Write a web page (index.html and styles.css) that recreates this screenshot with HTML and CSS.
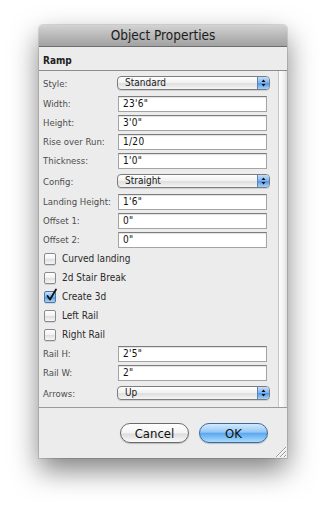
FILE: index.html
```html
<html>

<head>
  <title>Object Properties</title>
  <link rel="stylesheet" href="styles.css">
</head>

<body>
  <div class="window">
    <div class="titlebar">Object Properties</div>
    <div class="header">Ramp</div>

    <div class="main">
      <div class="form">
        <div class="row tall">
          <span class="label">Style:</span>
          <div class="popup"><span class="value">Standard</span><span class="arrows"><svg width="11" height="12" viewBox="0 0 11 12"><path d="M3.5 5 L5.5 2.5 L7.5 5 Z M3.5 7 L5.5 9.5 L7.5 7 Z" fill="#111"/></svg></span></div>
        </div>
        <div class="row"><span class="label">Width:</span><div class="field">23'6"</div></div>
        <div class="row"><span class="label">Height:</span><div class="field">3'0"</div></div>
        <div class="row"><span class="label">Rise over Run:</span><div class="field">1/20</div></div>
        <div class="row"><span class="label">Thickness:</span><div class="field">1'0"</div></div>
        <div class="row tall">
          <span class="label">Config:</span>
          <div class="popup"><span class="value">Straight</span><span class="arrows"><svg width="11" height="12" viewBox="0 0 11 12"><path d="M3.5 5 L5.5 2.5 L7.5 5 Z M3.5 7 L5.5 9.5 L7.5 7 Z" fill="#111"/></svg></span></div>
        </div>
        <div class="row"><span class="label">Landing Height:</span><div class="field">1'6"</div></div>
        <div class="row"><span class="label">Offset 1:</span><div class="field">0"</div></div>
        <div class="row"><span class="label">Offset 2:</span><div class="field">0"</div></div>

        <div class="row"><span class="check"></span><span class="clabel">Curved landing</span></div>
        <div class="row"><span class="check"></span><span class="clabel">2d Stair Break</span></div>
        <div class="row">
          <span class="check on"><svg class="tick" width="13" height="14" viewBox="0 0 13 14"><path d="M2.5 8 L5 11.5 L11 1.5" fill="none" stroke="#111" stroke-width="1.8" stroke-linecap="round" stroke-linejoin="round"/></svg></span>
          <span class="clabel">Create 3d</span>
        </div>
        <div class="row"><span class="check"></span><span class="clabel">Left Rail</span></div>
        <div class="row"><span class="check"></span><span class="clabel">Right Rail</span></div>

        <div class="row"><span class="label">Rail H:</span><div class="field">2'5"</div></div>
        <div class="row"><span class="label">Rail W:</span><div class="field">2"</div></div>
        <div class="row tall">
          <span class="label">Arrows:</span>
          <div class="popup"><span class="value">Up</span><span class="arrows"><svg width="11" height="12" viewBox="0 0 11 12"><path d="M3.5 5 L5.5 2.5 L7.5 5 Z M3.5 7 L5.5 9.5 L7.5 7 Z" fill="#111"/></svg></span></div>
        </div>
      </div>
      <div class="track"></div>
    </div>

    <div class="footer">
      <button class="btn">Cancel</button>
      <button class="btn ok">OK</button>
      <svg class="grip" width="14" height="14" viewBox="0 0 14 14">
        <path d="M3 13 L13 3 M7 13 L13 7 M11 13 L13 11" stroke="#9a9a9a" stroke-width="1"/>
        <path d="M4 13 L13 4 M8 13 L13 8 M12 13 L13 12" stroke="#fff" stroke-width="1"/>
      </svg>
    </div>
  </div>
</body>

</html>
```

FILE: styles.css
```css
* {
  box-sizing: border-box;
}

body {
  margin: 0;
  background: #fff;
  font-family: "DejaVu Sans Condensed", "DejaVu Sans", sans-serif;
  font-stretch: condensed;
  color: #222;
}

.window {
  position: relative;
  margin: 25px 0 0 39px;
  width: 248px;
  height: 433px;
  background: #ececec;
  border-radius: 4px 4px 0 0;
  box-shadow: 0 12px 28px rgba(0, 0, 0, 0.5), 0 0 0 1px rgba(0, 0, 0, 0.12);
  display: flex;
  flex-direction: column;
}

.titlebar {
  height: 22px;
  line-height: 21px;
  text-align: center;
  font-size: 13.5px;
  color: #1c1c1c;
  background: linear-gradient(#d3d3d3, #b9b9b9 50%, #a2a2a2);
  border-bottom: 1px solid #6e6e6e;
  border-radius: 4px 4px 0 0;
}

.header {
  height: 24px;
  padding: 8px 0 0 4px;
  font-size: 10px;
  font-weight: bold;
  line-height: 12px;
  border-bottom: 1px solid #8c8c8c;
}

.main {
  display: flex;
  height: 337px;
  border-bottom: 1px solid #9a9a9a;
}

.form {
  flex: 1;
  padding-top: 1px;
}

.track {
  width: 9px;
  border-left: 1px solid #c4c4c4;
  background: linear-gradient(90deg, #fdfdfd, #f2f2f2 60%, #dedede);
}

.row {
  display: flex;
  align-items: center;
  height: 19px;
  padding-left: 4px;
}

.row.tall {
  height: 22px;
}

.label {
  width: 75px;
  font-size: 9.5px;
  color: #4d4d4d;
  white-space: nowrap;
}

.field {
  width: 149px;
  height: 16px;
  padding-left: 4px;
  font-size: 10px;
  line-height: 14px;
  letter-spacing: 0.3px;
  color: #111;
  background: #fff;
  border: 1px solid #a4a4a4;
  border-top-color: #7c7c7c;
  box-shadow: inset 0 1px 1px rgba(0, 0, 0, 0.12);
}

.popup {
  display: flex;
  width: 153px;
  height: 14px;
  margin-left: -1px;
  border: 1px solid #7d7d7d;
  border-radius: 4px;
  background: linear-gradient(#ffffff, #f0f0f0 50%, #dedede 55%, #f6f6f6);
  box-shadow: 0 1px 0 rgba(0, 0, 0, 0.12);
  overflow: hidden;
}

.popup .value {
  flex: 1;
  padding-left: 7px;
  font-size: 10px;
  line-height: 12px;
  color: #1a1a1a;
}

.popup .arrows {
  width: 12px;
  border-left: 1px solid #5d82ad;
  background: linear-gradient(#c4defa, #7db4ef 48%, #5396e6 52%, #a3d3fb);
}

.popup .arrows svg {
  display: block;
}

.check {
  position: relative;
  width: 12px;
  height: 12px;
  margin: 0 6px 0 1px;
  border: 1px solid #8a8a8a;
  border-radius: 2px;
  background: linear-gradient(#ffffff, #f1f1f1 50%, #e0e0e0 55%, #f7f7f7);
  box-shadow: 0 1px 0 rgba(0, 0, 0, 0.1);
}

.check.on {
  border-color: #4f78a8;
  background: linear-gradient(#c6e0fb, #82b8f0 48%, #5799e6 52%, #a6d5fb);
}

.tick {
  position: absolute;
  left: 0;
  top: -4px;
}

.clabel {
  font-size: 10px;
  color: #2a2a2a;
}

.footer {
  position: relative;
  flex: 1;
  display: flex;
  justify-content: flex-end;
  align-items: flex-start;
  gap: 10px;
  padding: 15px 19px 0 0;
}

.btn {
  width: 69px;
  height: 20px;
  padding: 0;
  font-family: inherit;
  font-size: 13px;
  line-height: 17px;
  color: #111;
  border: 1px solid #6b6b6b;
  border-radius: 10px;
  background: linear-gradient(#ffffff, #f3f3f3 50%, #dcdcdc 55%, #fafafa);
  box-shadow: 0 1px 1px rgba(0, 0, 0, 0.2);
}

.ok {
  border-color: #3c6a9e;
  background: linear-gradient(#d4e9fc, #94c8f5 45%, #5ba8ee 52%, #a9dcfd);
}

.grip {
  position: absolute;
  right: 0;
  bottom: 0;
}
```
